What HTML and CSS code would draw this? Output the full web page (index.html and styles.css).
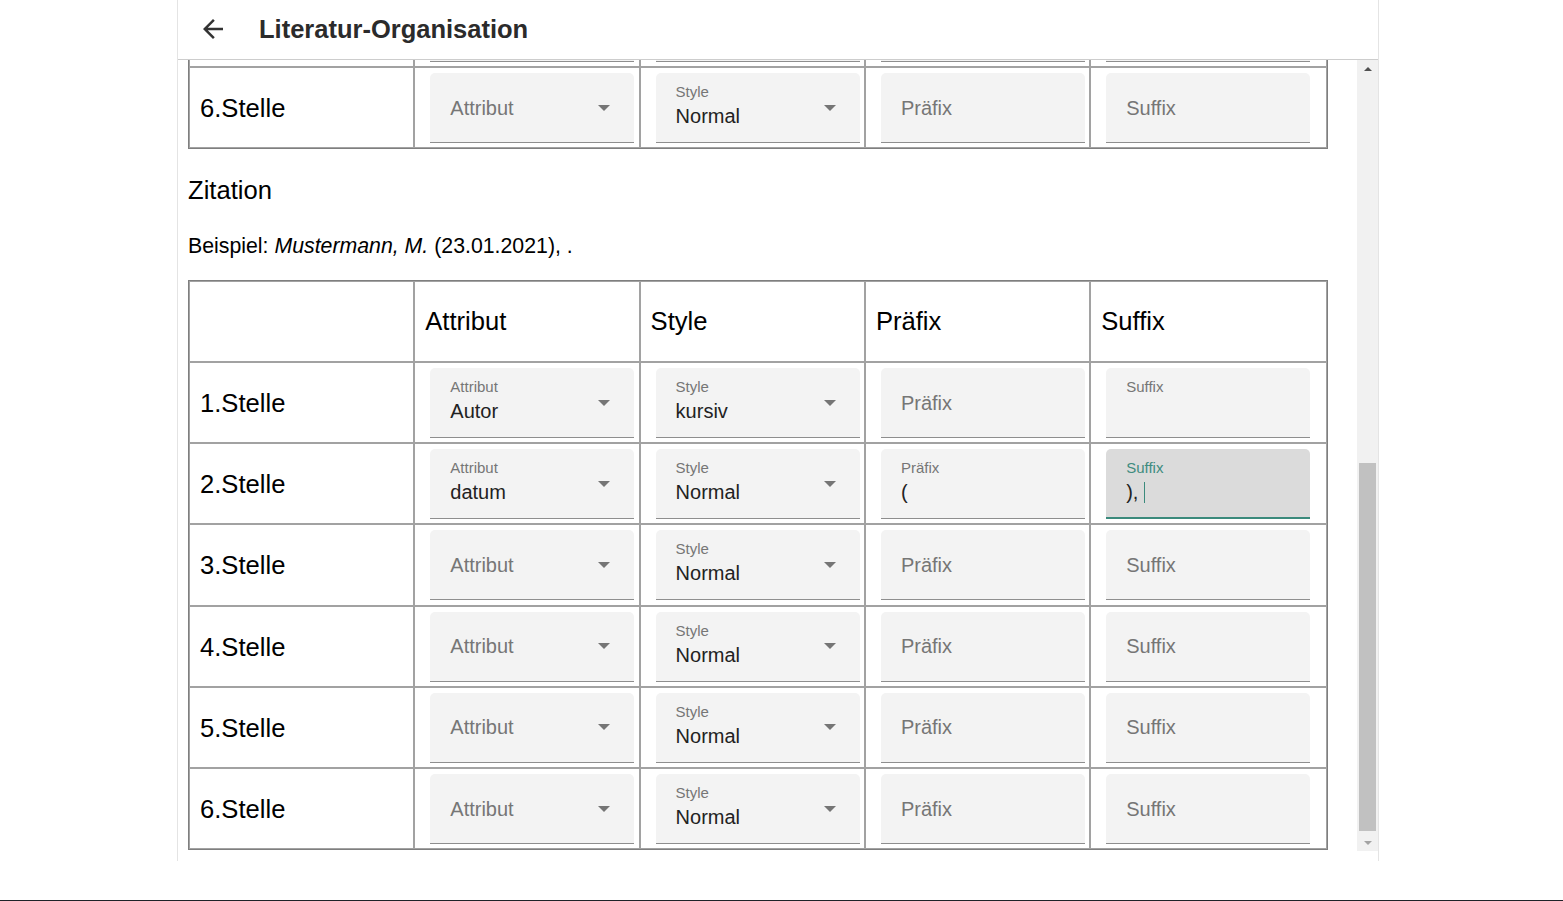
FILE: index.html
```html
<!DOCTYPE html>
<html lang="de">
<head>
<meta charset="utf-8">
<title>Literatur-Organisation</title>
<link rel="stylesheet" href="styles.css">
</head>
<body>
<div class="panel">
  <header class="appbar">
    <svg class="back" viewBox="0 0 24 24" width="30" height="30"><path d="M20 11H7.83l5.59-5.59L12 4l-8 8 8 8 1.41-1.41L7.83 13H20v-2z"/></svg>
    <h1 class="title">Literatur-Organisation</h1>
  </header>
  <div class="body">
    <div class="scroll">
      <div class="content">
        <table class="grid grid-top">
          <tr>
            <td class="pos"></td>
            <td><div class="field"></div></td>
            <td><div class="field"></div></td>
            <td><div class="field"></div></td>
            <td><div class="field"></div></td>
          </tr>
          <tr>
            <td class="pos">6.Stelle</td>
            <td><div class="field select"><div class="fi"><span class="ph">Attribut</span></div><svg class="dd" viewBox="0 0 12 6"><path d="M0 0h12L6 6z"/></svg></div></td>
            <td><div class="field select"><div class="fi filled"><span class="lb">Style</span><span class="val">Normal</span></div><svg class="dd" viewBox="0 0 12 6"><path d="M0 0h12L6 6z"/></svg></div></td>
            <td><div class="field"><div class="fi"><span class="ph">Präfix</span></div></div></td>
            <td><div class="field"><div class="fi"><span class="ph">Suffix</span></div></div></td>
          </tr>
        </table>

        <h2 class="section">Zitation</h2>
        <p class="example">Beispiel: <i>Mustermann, M.</i> (23.01.2021), .</p>

        <table class="grid">
          <tr>
            <th><div class="hcell"></div></th>
            <th><div class="hcell">Attribut</div></th>
            <th><div class="hcell">Style</div></th>
            <th><div class="hcell">Präfix</div></th>
            <th><div class="hcell">Suffix</div></th>
          </tr>
          <tr>
            <td class="pos">1.Stelle</td>
            <td><div class="field select"><div class="fi filled"><span class="lb">Attribut</span><span class="val">Autor</span></div><svg class="dd" viewBox="0 0 12 6"><path d="M0 0h12L6 6z"/></svg></div></td>
            <td><div class="field select"><div class="fi filled"><span class="lb">Style</span><span class="val">kursiv</span></div><svg class="dd" viewBox="0 0 12 6"><path d="M0 0h12L6 6z"/></svg></div></td>
            <td><div class="field"><div class="fi"><span class="ph">Präfix</span></div></div></td>
            <td><div class="field"><div class="fi filled"><span class="lb">Suffix</span><span class="val"></span></div></div></td>
          </tr>
          <tr>
            <td class="pos">2.Stelle</td>
            <td><div class="field select"><div class="fi filled"><span class="lb">Attribut</span><span class="val">datum</span></div><svg class="dd" viewBox="0 0 12 6"><path d="M0 0h12L6 6z"/></svg></div></td>
            <td><div class="field select"><div class="fi filled"><span class="lb">Style</span><span class="val">Normal</span></div><svg class="dd" viewBox="0 0 12 6"><path d="M0 0h12L6 6z"/></svg></div></td>
            <td><div class="field"><div class="fi filled"><span class="lb">Präfix</span><span class="val">(</span></div></div></td>
            <td><div class="field focused"><div class="fi filled"><span class="lb">Suffix</span><span class="val">), <span class="cursor"></span></span></div></div></td>
          </tr>
          <tr>
            <td class="pos">3.Stelle</td>
            <td><div class="field select"><div class="fi"><span class="ph">Attribut</span></div><svg class="dd" viewBox="0 0 12 6"><path d="M0 0h12L6 6z"/></svg></div></td>
            <td><div class="field select"><div class="fi filled"><span class="lb">Style</span><span class="val">Normal</span></div><svg class="dd" viewBox="0 0 12 6"><path d="M0 0h12L6 6z"/></svg></div></td>
            <td><div class="field"><div class="fi"><span class="ph">Präfix</span></div></div></td>
            <td><div class="field"><div class="fi"><span class="ph">Suffix</span></div></div></td>
          </tr>
          <tr>
            <td class="pos">4.Stelle</td>
            <td><div class="field select"><div class="fi"><span class="ph">Attribut</span></div><svg class="dd" viewBox="0 0 12 6"><path d="M0 0h12L6 6z"/></svg></div></td>
            <td><div class="field select"><div class="fi filled"><span class="lb">Style</span><span class="val">Normal</span></div><svg class="dd" viewBox="0 0 12 6"><path d="M0 0h12L6 6z"/></svg></div></td>
            <td><div class="field"><div class="fi"><span class="ph">Präfix</span></div></div></td>
            <td><div class="field"><div class="fi"><span class="ph">Suffix</span></div></div></td>
          </tr>
          <tr>
            <td class="pos">5.Stelle</td>
            <td><div class="field select"><div class="fi"><span class="ph">Attribut</span></div><svg class="dd" viewBox="0 0 12 6"><path d="M0 0h12L6 6z"/></svg></div></td>
            <td><div class="field select"><div class="fi filled"><span class="lb">Style</span><span class="val">Normal</span></div><svg class="dd" viewBox="0 0 12 6"><path d="M0 0h12L6 6z"/></svg></div></td>
            <td><div class="field"><div class="fi"><span class="ph">Präfix</span></div></div></td>
            <td><div class="field"><div class="fi"><span class="ph">Suffix</span></div></div></td>
          </tr>
          <tr>
            <td class="pos">6.Stelle</td>
            <td><div class="field select"><div class="fi"><span class="ph">Attribut</span></div><svg class="dd" viewBox="0 0 12 6"><path d="M0 0h12L6 6z"/></svg></div></td>
            <td><div class="field select"><div class="fi filled"><span class="lb">Style</span><span class="val">Normal</span></div><svg class="dd" viewBox="0 0 12 6"><path d="M0 0h12L6 6z"/></svg></div></td>
            <td><div class="field"><div class="fi"><span class="ph">Präfix</span></div></div></td>
            <td><div class="field"><div class="fi"><span class="ph">Suffix</span></div></div></td>
          </tr>
        </table>
      </div>
    </div>
    <div class="scrollbar">
      <div class="sb-btn"><svg viewBox="0 0 8 4" width="8" height="4"><path d="M0 4L4 0l4 4z" fill="#505050"/></svg></div>
      <div class="sb-track"><div class="sb-thumb"></div></div>
      <div class="sb-btn"><svg viewBox="0 0 8 4" width="8" height="4"><path d="M0 0h8L4 4z" fill="#a3a3a3"/></svg></div>
    </div>
  </div>
</div>
<div class="edge"></div>
</body>
</html>
```

FILE: styles.css
```css
html, body {
  margin: 0;
  padding: 0;
  background: #ffffff;
}
body {
  height: 901px;
  display: flex;
  flex-direction: column;
  font-family: "Liberation Sans", Arial, sans-serif;
  color: #000;
  overflow: hidden;
}
.panel {
  margin-left: 177px;
  width: 1202px;
  box-sizing: border-box;
  height: 861px;
  border-left: 1px solid #e4e4e4;
  border-right: 1px solid #e4e4e4;
  display: flex;
  flex-direction: column;
  padding-bottom: 10px;
}
.appbar {
  flex: none;
  border-bottom: 1px solid #cdcdcd;
  display: flex;
  align-items: center;
  padding-left: 20px;
  padding-bottom: 1px;
  box-sizing: border-box;
  height: 60px;
}
.back {
  fill: #333333;
  flex: none;
}
.title {
  margin: 0 0 0 31px;
  font-size: 25.5px;
  font-weight: 700;
  color: #2b2b2b;
  line-height: 30px;
}
.body {
  flex: 1;
  display: flex;
  min-height: 0;
}
.scroll {
  flex: 1;
  overflow: hidden;
  min-width: 0;
}
.content {
  padding-left: 10px;
}
.grid {
  width: 1140px;
  table-layout: fixed;
  border-collapse: separate;
  border-spacing: 0;
  border: 1px solid #7f7f7f;
}
.grid-top {
  margin-top: -75px;
}
.grid th, .grid td {
  border: 1px solid #a2a2a2;
  box-sizing: border-box;
  padding: 5px 0 4.2px 10px;
  vertical-align: middle;
  text-align: left;
  font-weight: 400;
  font-size: 25.6px;
}
.grid th:nth-child(-n+4), .grid td:nth-child(-n+4) {
  width: 225.3px;
}
.hcell {
  height: 70px;
  display: flex;
  align-items: center;
}
.pos {
  line-height: 30px;
}
.section {
  margin: 25.5px 0 0 0;
  font-size: 25.6px;
  font-weight: 400;
  line-height: 30px;
}
.example {
  margin: 29px 0 22px 0;
  font-size: 21.3px;
  line-height: 24px;
}
.field {
  width: 204px;
  height: 70px;
  box-sizing: border-box;
  margin-left: 5px;
  background: #f3f3f3;
  border-radius: 5px 5px 0 0;
  border-bottom: 1px solid #8e8e8e;
  display: flex;
  align-items: stretch;
  padding-left: 20px;
}
.fi {
  flex: 1;
  display: flex;
  flex-direction: column;
  justify-content: center;
  min-width: 0;
}
.fi.filled {
  justify-content: flex-start;
  padding-top: 10px;
}
.ph {
  font-size: 20px;
  line-height: 24px;
  color: #767676;
}
.lb {
  font-size: 15px;
  line-height: 18px;
  color: #767676;
}
.val {
  margin-top: 3px;
  font-size: 20px;
  line-height: 24px;
  color: #222222;
  white-space: pre;
  height: 24px;
}
.dd {
  flex: none;
  width: 12px;
  height: 6px;
  align-self: center;
  margin-right: 24px;
  fill: #757575;
}
.field.focused {
  background: #dbdbdb;
  border-bottom: 2px solid #3b8a7c;
}
.field.focused .lb {
  color: #3f8c7f;
}
.cursor {
  display: inline-block;
  width: 1px;
  height: 21px;
  background: #3b8a7c;
  vertical-align: -4px;
}
.scrollbar {
  flex: none;
  width: 21px;
  background: #f1f1f1;
  display: flex;
  flex-direction: column;
}
.sb-btn {
  height: 17px;
  flex: none;
  display: flex;
  align-items: center;
  justify-content: center;
}
.sb-track {
  flex: 1;
  display: flex;
  flex-direction: column;
  padding: 386px 2px 3px 2px;
}
.sb-thumb {
  flex: 1;
  background: #c1c1c1;
}
.edge {
  margin-top: auto;
  height: 1px;
  background: #1e2228;
}
```
